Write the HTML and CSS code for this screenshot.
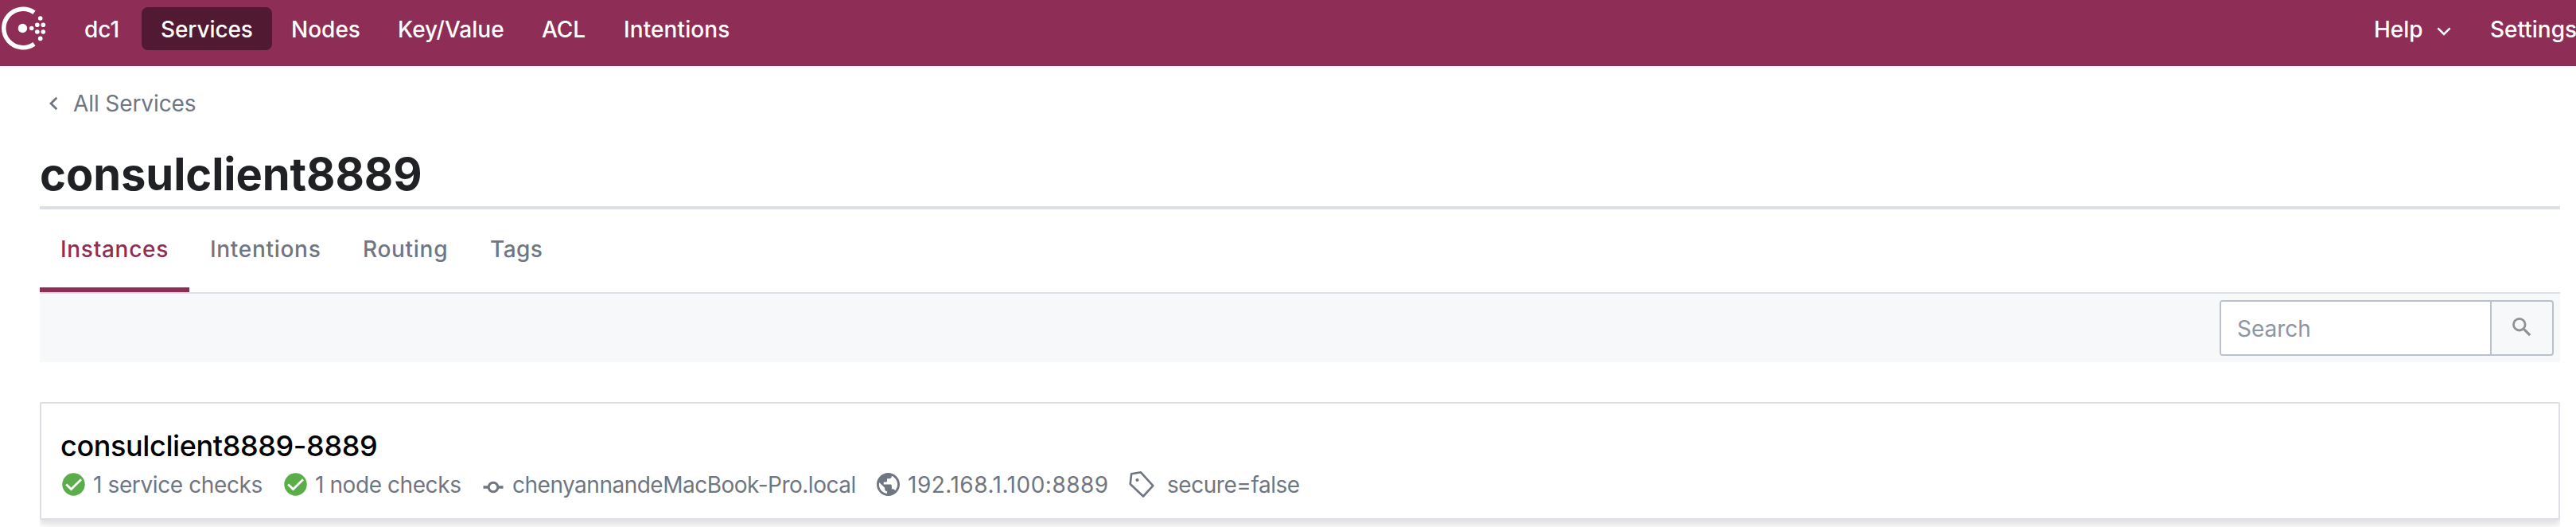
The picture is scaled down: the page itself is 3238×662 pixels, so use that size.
FILE: index.html
```html
<!DOCTYPE html>
<html lang="en">
<head>
<meta charset="utf-8">
<title>consulclient8889 - Consul</title>
<link rel="stylesheet" href="styles.css">
</head>
<body>
<header class="header">
  <svg class="logo" viewBox="0 0 60 60" width="60" height="60" fill="#fff">
    <path d="M43 11.8A24.2 24.2 0 1 0 43 51.2" fill="none" stroke="#fff" stroke-width="5.5"/>
    <circle cx="28.4" cy="31.5" r="5.7"/><circle cx="39.7" cy="31.5" r="2.8"/>
    <circle cx="46.8" cy="27.2" r="2.8"/><circle cx="46.8" cy="36" r="2.8"/>
    <circle cx="54.3" cy="27.2" r="2.8"/><circle cx="54.3" cy="36" r="2.8"/>
    <circle cx="50.7" cy="19" r="2.8"/><circle cx="50.7" cy="44.4" r="2.8"/>
  </svg>
  <nav class="nav">
    <a class="nav-item dc">dc1</a>
    <a class="nav-item services active">Services</a>
    <a class="nav-item nodes">Nodes</a>
    <a class="nav-item kv">Key/Value</a>
    <a class="nav-item acl">ACL</a>
    <a class="nav-item nav-intentions">Intentions</a>
  </nav>
  <nav class="nav nav-right">
    <a class="nav-item help">Help
      <svg width="20" height="14" viewBox="0 0 20 14" fill="none" stroke="#fff" stroke-width="2.6"><path d="M2.4 2.3L10 9.9l7.6-7.6"/></svg>
    </a>
    <a class="nav-item">Settings</a>
  </nav>
</header>
<main class="content">
  <a class="back">
    <svg width="12" height="18" viewBox="0 0 12 18" fill="none" stroke="#6f7682" stroke-width="2.8"><path d="M10.3 1.8L3 9l7.3 7.2"/></svg>
    <span>All Services</span>
  </a>
  <h1 class="title">consulclient8889</h1>
  <nav class="tabs">
    <a class="tab instances selected">Instances</a>
    <a class="tab intentions">Intentions</a>
    <a class="tab routing">Routing</a>
    <a class="tab tags">Tags</a>
  </nav>
  <form class="filter">
    <div class="search">
      <span class="search-input">Search</span>
      <span class="search-button">
        <svg width="26" height="26" viewBox="0 0 26 26" fill="none" stroke="#919191" stroke-width="2.8"><circle cx="9.8" cy="9.7" r="7.3"/><path d="M15.2 15.1l8 8" stroke-width="3.2"/></svg>
      </span>
    </div>
  </form>
  <article class="card">
    <h2 class="card-title">consulclient8889-8889</h2>
    <ul class="meta">
      <li class="m-service"><svg class="icon" viewBox="0 0 29 29"><circle cx="14.5" cy="14.5" r="14.2" fill="#5bad4a"/><path d="M5.2 14.4l6.3 6.2L24 8.2" fill="none" stroke="#fff" stroke-width="2.8"/></svg><span>1 service checks</span></li>
      <li class="m-node"><svg class="icon" viewBox="0 0 29 29"><circle cx="14.5" cy="14.5" r="14.2" fill="#5bad4a"/><path d="M5.2 14.4l6.3 6.2L24 8.2" fill="none" stroke="#fff" stroke-width="2.8"/></svg><span>1 node checks</span></li>
      <li class="m-host"><svg class="commit" viewBox="0 0 26 16" fill="none" stroke="#6f7682" stroke-width="3"><circle cx="13" cy="8" r="5.8"/><path d="M.5 8h6.7M18.8 8h6.7" stroke-width="3.6"/></svg><span>chenyannandeMacBook-Pro.local</span></li>
      <li class="m-address"><svg class="icon" viewBox="2 2 20 20" fill="#6f7682"><path d="M12 2C6.48 2 2 6.48 2 12s4.48 10 10 10 10-4.48 10-10S17.52 2 12 2zm-1 17.93c-3.95-.49-7-3.85-7-7.93 0-.62.08-1.21.21-1.79L9 15v1c0 1.100.9 2 2 2v1.930zm6.900-2.540c-.26-.81-1-1.390-1.900-1.390h-1v-3c0-.55-.45-1-1-1H8v-2h2c.55 0 1-.45 1-1V7h2c1.100 0 2-.9 2-2v-.41c2.930 1.190 5 4.060 5 7.410 0 2.080-.8 3.970-2.100 5.390z"/></svg><span>192.168.1.100:8889</span></li>
      <li class="m-tag"><svg class="tag" viewBox="0 0 32 34" fill="none" stroke="#6f7682" stroke-width="2.6" stroke-linejoin="round"><path d="M3.200 4.200L15 2.300 30.300 19.200 18 32.500 1.700 17z"/><circle cx="10.500" cy="12" r="2.100" fill="#6f7682" stroke="none"/></svg><span>secure=false</span></li>
    </ul>
  </article>
</main>
</body>
</html>
```
FILE: styles.css
```css
* { box-sizing: border-box; }
body { margin: 0; height: 662px; overflow: hidden; background: #fff; font: 400 28px/34px Inter, "Liberation Sans", sans-serif; color: #6f7682; }
.header { display: flex; justify-content: space-between; height: 83px; overflow: hidden; background: #8e2e57; color: #fff; }
.logo { flex: none; margin-top: 4px; }
.nav { display: flex; align-items: flex-start; padding-top: 9px; flex: 1; }
.nav-item { display: flex; align-items: center; height: 54px; padding: 2px 24px 0; border-radius: 8px; font-weight: 550; white-space: nowrap; flex: none; }
.dc { width: 94px; margin-left: 22px; margin-right: 2px; }
.services { width: 164px; letter-spacing: -.1px; }
.active { background: #511a32; }
.nodes { width: 134px; }
.kv { width: 181px; }
.acl { width: 103px; }
.nav-intentions { letter-spacing: .1px; }
.nav-right { flex: none; width: 278px; }
.help { width: 146px; justify-content: space-between; }
.help svg { margin-top: 5px; }
.content { margin: 0 20px 0 50px; }
.back { display: flex; align-items: center; height: 94px; padding-left: 11px; gap: 19px; letter-spacing: -.1px; }
.title { margin: 0; height: 86px; padding-top: 8px; border-bottom: 4px solid #dce0e6; font-size: 56px; line-height: 68px; font-weight: 700; color: #1f2124; letter-spacing: -.05px; }
.tabs { display: flex; height: 106px; border-bottom: 2px solid #dce0e6; }
.tab { padding: 33px 26px 0; height: 104px; font-weight: 500; letter-spacing: .7px; }
.instances { width: 188px; }
.selected { color: #8e2e57; border-bottom: 6px solid #8e2e57; }
.intentions { width: 192px; }
.routing { width: 160px; }
.tags { letter-spacing: .4px; }
.filter { display: flex; justify-content: flex-end; height: 86px; padding: 8px; background: #f6f8fa; }
.search { display: flex; width: 420px; height: 70px; border: 2px solid #bac1cc; border-radius: 4px; overflow: hidden; }
.search-input { width: 338px; padding: 17px 20px 0; background: #fff; color: #8d95a3; }
.search-button { flex: 1; border-left: 2px solid #bac1cc; padding: 19px 0 0 25px; }
.search-button svg { display: block; }
.card { height: 148px; margin-top: 50px; padding: 30px 24px 0; border: 2px solid #dce0e6; border-radius: 2px; box-shadow: 0 6px 8px rgba(0,0,0,.13); clip-path: inset(0 0 -20px 0); }
.card-title { margin: 0; font-size: 36px; line-height: 46px; font-weight: 500; color: #000; letter-spacing: -.38px; }
.meta { display: flex; align-items: center; list-style: none; margin: 5px 0 0; padding: 0 0 0 2px; height: 40px; }
.meta li { display: flex; align-items: center; flex: none; white-space: nowrap; }
.meta span { padding-top: 2px; }
.icon { width: 29px; height: 29px; margin-right: 10px; }
.m-service { width: 279px; letter-spacing: -.38px; }
.m-node { width: 250px; letter-spacing: -.42px; }
.commit { width: 26px; height: 16px; margin: 8px 11px 0 0; }
.m-host { width: 495px; letter-spacing: -.5px; }
.m-address { width: 317px; letter-spacing: .5px; }
.tag { width: 32px; height: 34px; margin-right: 16px; }
.m-tag { letter-spacing: -.45px; }
```
